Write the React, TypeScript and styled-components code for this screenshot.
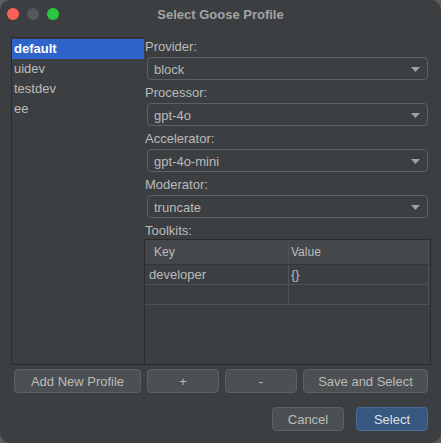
import React, { useState } from "react";
import styled, { createGlobalStyle } from "styled-components";

const GlobalStyle = createGlobalStyle`
  html, body {
    margin: 0;
    padding: 0;
    background: #5b5d5f;
  }
  body {
    font-family: "Liberation Sans", Arial, sans-serif;
    font-size: 13px;
    color: #bbbbbb;
  }
  * {
    box-sizing: border-box;
  }
`;

const Window = styled.div`
  width: 441px;
  height: 443px;
  background-color: #3c3f41;
  border-radius: 10px;
  overflow: hidden;
  display: flex;
  flex-direction: column;
`;

const TitleBar = styled.div`
  position: relative;
  height: 28px;
  display: flex;
  align-items: center;
  justify-content: center;
`;

const Lights = styled.div`
  position: absolute;
  left: 7px;
  top: 8px;
  display: flex;
  gap: 8px;
`;

const Light = styled.span<{ $color: string }>`
  width: 12px;
  height: 12px;
  border-radius: 50%;
  background-color: ${(p) => p.$color};
`;

const Title = styled.div`
  font-weight: bold;
  font-size: 13px;
  color: #a3a3a3;
`;

const Main = styled.div`
  display: grid;
  grid-template-columns: 133px 287px;
  margin: 9px 0 0 11px;
  height: 328px;
`;

const ProfileList = styled.div`
  border: 1px solid #2b2b2b;
  border-right: none;
  padding-top: 1px;
  display: flex;
  flex-direction: column;
`;

const ProfileItem = styled.div<{ $selected?: boolean }>`
  height: 20px;
  line-height: 20px;
  padding-left: 2px;
  color: ${(p) => (p.$selected ? "#ffffff" : "#bbbbbb")};
  background-color: ${(p) => (p.$selected ? "#2f65ca" : "transparent")};
  font-weight: ${(p) => (p.$selected ? 600 : 400)};
  cursor: default;
`;

const Settings = styled.div`
  display: flex;
  flex-direction: column;
  min-width: 0;
`;

const Field = styled.div`
  display: flex;
  flex-direction: column;
  margin-bottom: 3px;
`;

const Label = styled.div<{ $h?: number }>`
  height: ${(p) => p.$h ?? 20}px;
  padding: 2px 0 0 1px;
  line-height: 16px;
`;

const Combo = styled.div`
  position: relative;
  height: 23px;
  margin: 0 3px;
  border: 1px solid #5e6163;
  border-radius: 4px;
  background-color: #3c3f41;
  display: flex;
  align-items: center;
  padding: 1px 0 0 6px;
  color: #bbbbbb;
`;

const Arrow = styled.svg`
  position: absolute;
  right: 7px;
  top: 9px;
`;

const Table = styled.div`
  flex: 1;
  border: 1px solid #2b2b2b;
  padding-right: 1px;
  display: flex;
  flex-direction: column;
`;

const Row = styled.div<{ $header?: boolean }>`
  display: grid;
  grid-template-columns: 143px 1fr;
  height: ${(p) => (p.$header ? 25 : 20)}px;
  background-color: ${(p) => (p.$header ? "#45484a" : "transparent")};
  border-bottom: 1px solid ${(p) => (p.$header ? "#333537" : "#4e5254")};
  border-right: 1px solid #4e5254;
`;

const Cell = styled.div<{ $header?: boolean }>`
  display: flex;
  align-items: center;
  padding-left: ${(p) => (p.$header ? 9 : 4)}px;
  font-size: ${(p) => (p.$header ? 12 : 13)}px;
  color: #bbbbbb;
  & + & {
    border-left: 1px solid ${(p) => (p.$header ? "#333537" : "#4e5254")};
    padding-left: ${(p) => (p.$header ? 7 : 2)}px;
  }
`;

const ActionRow = styled.div`
  display: grid;
  grid-template-columns: 127px 72px 72px 1fr;
  gap: 6px;
  margin: 4px 13px 0 14px;
`;

const Button = styled.button<{ $primary?: boolean }>`
  height: 24px;
  border-radius: 4px;
  border: 1px solid ${(p) => (p.$primary ? "#4a6f96" : "#5e6163")};
  background-color: ${(p) => (p.$primary ? "#365880" : "#4c5052")};
  color: ${(p) => (p.$primary ? "#dfe1e5" : "#bbbbbb")};
  font-family: inherit;
  font-size: 13px;
  padding: 0;
  cursor: pointer;
`;

const Footer = styled.div`
  display: grid;
  grid-template-columns: 72px 72px;
  gap: 12px;
  justify-content: end;
  margin: 14px 13px 0 0;
`;

const profiles = ["default", "uidev", "testdev", "ee"];

const fields = [
  { label: "Provider:", value: "block" },
  { label: "Processor:", value: "gpt-4o" },
  { label: "Accelerator:", value: "gpt-4o-mini" },
  { label: "Moderator:", value: "truncate" },
];

function App() {
  const [selected, setSelected] = useState("default");

  return (
    <>
      <GlobalStyle />
      <Window>
        <TitleBar>
          <Lights>
            <Light $color="#fe5f57" />
            <Light $color="#56595b" />
            <Light $color="#2ac840" />
          </Lights>
          <Title>Select Goose Profile</Title>
        </TitleBar>
        <Main>
          <ProfileList>
            {profiles.map((name) => (
              <ProfileItem
                key={name}
                $selected={name === selected}
                onClick={() => setSelected(name)}
              >
                {name}
              </ProfileItem>
            ))}
          </ProfileList>
          <Settings>
            {fields.map((f) => (
              <Field key={f.label}>
                <Label>{f.label}</Label>
                <Combo>
                  {f.value}
                  <Arrow width="9" height="5" viewBox="0 0 9 5">
                    <path d="M0 0 L9 0 L4.5 5 Z" fill="#a0a0a0" />
                  </Arrow>
                </Combo>
              </Field>
            ))}
            <Label $h={18}>Toolkits:</Label>
            <Table>
              <Row $header>
                <Cell $header>Key</Cell>
                <Cell $header>Value</Cell>
              </Row>
              <Row>
                <Cell>developer</Cell>
                <Cell>{"{}"}</Cell>
              </Row>
              <Row>
                <Cell />
                <Cell />
              </Row>
            </Table>
          </Settings>
        </Main>
        <ActionRow>
          <Button>Add New Profile</Button>
          <Button>+</Button>
          <Button>-</Button>
          <Button>Save and Select</Button>
        </ActionRow>
        <Footer>
          <Button>Cancel</Button>
          <Button $primary>Select</Button>
        </Footer>
      </Window>
    </>
  );
}

export default App;
